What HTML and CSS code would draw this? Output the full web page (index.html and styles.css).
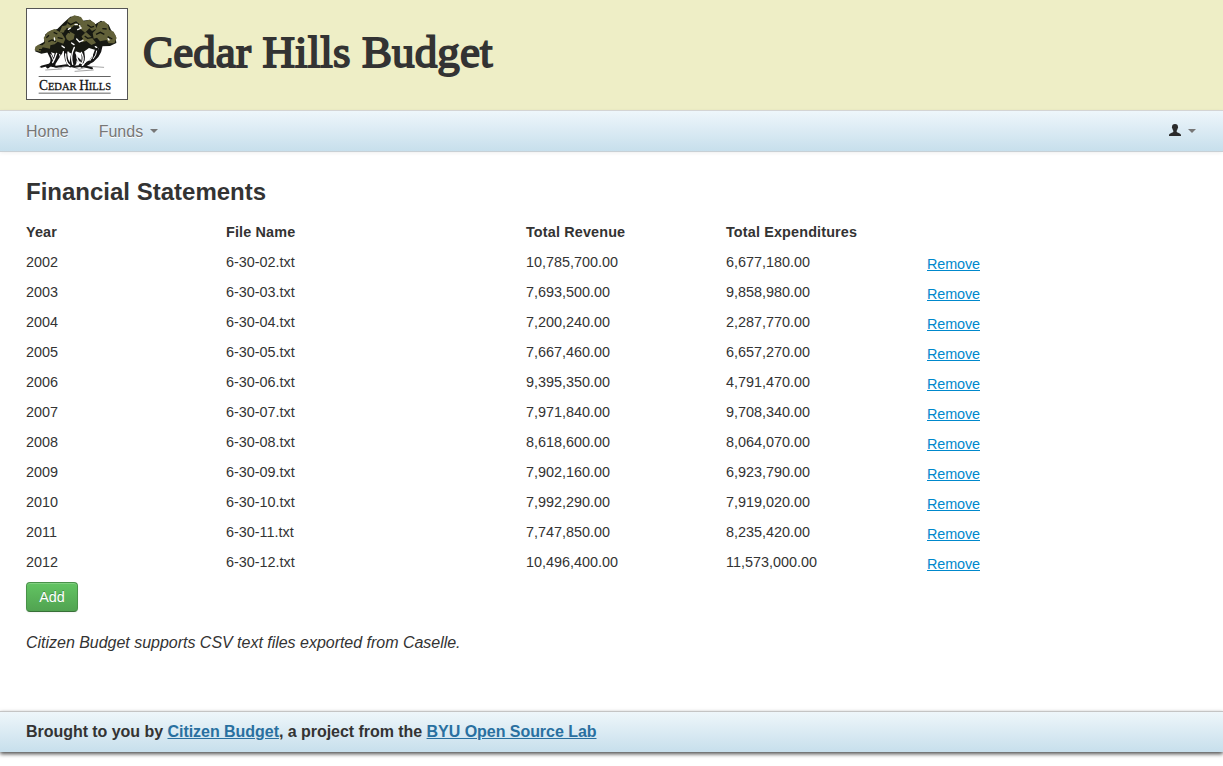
FILE: index.html
```html
<!DOCTYPE html>
<html lang="en">
<head>
<meta charset="utf-8">
<title>Cedar Hills Budget</title>
<link rel="stylesheet" href="styles.css">
</head>
<body>
<header class="masthead">
<svg class="logo" viewBox="18 12 306 276" role="img" aria-label="Cedar Hills">
<rect x="19.5" y="13.5" width="303" height="273" fill="#fff" stroke="#555" stroke-width="3"/>
<g fill="none" stroke="#141414" stroke-linecap="round">
<path d="M60 189L92 184L116 192L150 185L177 196L207 187L251 190M77 198L125 195M165 202L220 198" stroke="#777" stroke-width="2"/>
<path d="M83 188Q99 181 96 163L86 142M98 184Q110 164 123 144M101 183L111 139M151 185Q135 171 137 137M155 183Q151 160 172 120M160 182Q172 177 153 134M181 184Q194 174 188 145M185 186Q219 179 230 137M178 170Q157 155 158 130M202 178Q239 162 243 124" stroke-width="10"/>
<path d="M64 188L86 182L108 188L139 184L164 188L187 185L216 193" stroke-width="6"/>
</g>
<path d="M45 142L54 124L72 114L76 91L92 80L112 75L131 56L151 38L174 36L188 50L210 47L226 61L243 50L266 62L273 78L286 93L289 117L270 126L245 127L229 139L207 132L185 148L167 142L151 148L136 139L111 150L90 144L64 149Z" fill="#171912"/>
<g fill="#626139">
<path d="M44 139L46 128L55 122L67 124L75 117L71 101L83 84L103 75L125 87L136 105L130 119L113 113L104 121L91 124L90 134L68 130L61 143Z"/>
<path d="M119 85L126 67L139 64L145 45L163 34L183 39L193 55L184 69L164 63L151 74L141 71L130 86Z"/>
<path d="M180 74L188 53L208 47L224 57L230 74L216 81L208 73L195 86L188 80Z"/>
<path d="M227 78L235 56L252 51L264 62L267 77L281 83L290 102L283 118L266 118L260 108L240 112L231 101L221 104L218 87Z"/>
<path d="M137 96L148 82L164 91L161 106L148 111L140 106ZM185 97L198 84L214 98L228 117L214 123L199 111L187 115Z"/>
</g>
<g fill="none" stroke="#15170f" stroke-width="4">
<path d="M79 101L87 94M85 113L96 108L108 112M101 85L112 90M113 101L128 104M142 55L152 62L168 54L181 65M134 80L150 87M178 96L188 105M202 62L213 70L222 67M228 91L241 85L253 91M247 74L260 75M263 98L277 105M194 96L203 103L219 100M57 137L75 137"/>
</g>
<g fill="none" stroke="#fff" stroke-linecap="round">
<path d="M137 150Q137 178 149 184M163 130Q150 156 158 181M171 151Q168 172 187 180M202 153Q196 178 187 184M184 145Q195 164 185 178M110 148Q104 166 98 176" stroke-width="4"/>
<path d="M93 152L100 168M218 145Q221 159 210 170M230 141Q229 154 220 164M146 144L148 164M119 151L125 174" stroke-width="3"/>
<path d="M103 102L104 108M165 62L172 61M179 64L181 72M173 77L184 72M145 76L151 72M264 104L267 108M170 105L178 114L189 109M155 117L162 122M126 126L133 131M226 128L230 130" stroke-width="4"/>
</g>
<path d="M56 217.500H272M56 267.500H272" stroke="#444" stroke-width="2.500"/>
<text x="57" y="257" textLength="216" lengthAdjust="spacingAndGlyphs" class="logo-name"><tspan font-size="42">C</tspan>EDAR <tspan font-size="42">H</tspan>ILLS</text>
</svg>
<h1 class="site-title">Cedar Hills Budget</h1>
</header>
<nav class="navbar">
<a class="nav-link">Home</a>
<a class="nav-link">Funds<span class="caret"></span></a>
<a class="nav-link user"><svg class="user-icon" viewBox="0 0 12 12"><path d="M6 0C3.900 0 3 1.100 3 3C2.700 3.500 3 4.300 3.400 4.600C3.600 5.800 4 6.300 4.300 6.700V8C3.700 9 0 9 0 11.200V12H12V11.200C12 9 8.300 9 7.700 8V6.700C8 6.300 8.400 5.800 8.600 4.600C9 4.300 9.300 3.500 9 3C9 1.100 8.100 0 6 0Z" fill="#2b2b2b"/></svg><span class="caret"></span></a>
</nav>
<main class="content">
<h2 class="heading">Financial Statements</h2>
<table class="statements">
<thead><tr><th class="year">Year</th><th class="file">File Name</th><th class="money">Total Revenue</th><th class="money">Total Expenditures</th><th></th></tr></thead>
<tbody>
<tr><td>2002</td><td>6-30-02.txt</td><td>10,785,700.00</td><td>6,677,180.00</td><td class="action"><a class="remove">Remove</a></td></tr>
<tr><td>2003</td><td>6-30-03.txt</td><td>7,693,500.00</td><td>9,858,980.00</td><td class="action"><a class="remove">Remove</a></td></tr>
<tr><td>2004</td><td>6-30-04.txt</td><td>7,200,240.00</td><td>2,287,770.00</td><td class="action"><a class="remove">Remove</a></td></tr>
<tr><td>2005</td><td>6-30-05.txt</td><td>7,667,460.00</td><td>6,657,270.00</td><td class="action"><a class="remove">Remove</a></td></tr>
<tr><td>2006</td><td>6-30-06.txt</td><td>9,395,350.00</td><td>4,791,470.00</td><td class="action"><a class="remove">Remove</a></td></tr>
<tr><td>2007</td><td>6-30-07.txt</td><td>7,971,840.00</td><td>9,708,340.00</td><td class="action"><a class="remove">Remove</a></td></tr>
<tr><td>2008</td><td>6-30-08.txt</td><td>8,618,600.00</td><td>8,064,070.00</td><td class="action"><a class="remove">Remove</a></td></tr>
<tr><td>2009</td><td>6-30-09.txt</td><td>7,902,160.00</td><td>6,923,790.00</td><td class="action"><a class="remove">Remove</a></td></tr>
<tr><td>2010</td><td>6-30-10.txt</td><td>7,992,290.00</td><td>7,919,020.00</td><td class="action"><a class="remove">Remove</a></td></tr>
<tr><td>2011</td><td>6-30-11.txt</td><td>7,747,850.00</td><td>8,235,420.00</td><td class="action"><a class="remove">Remove</a></td></tr>
<tr><td>2012</td><td>6-30-12.txt</td><td>10,496,400.00</td><td>11,573,000.00</td><td class="action"><a class="remove">Remove</a></td></tr>
</tbody>
</table>
<button class="add">Add</button>
<p class="note">Citizen Budget supports CSV text files exported from Caselle.</p>
</main>
<footer class="footer">Brought to you by <a class="footer-link">Citizen Budget</a>, a project from the <a class="footer-link">BYU Open Source Lab</a></footer>
</body>
</html>
```
FILE: styles.css
```css
* { box-sizing: border-box; }
body { margin: 0; height: 766px; overflow: hidden; background: #fff; color: #333; font: 16px/20px "Liberation Sans", Arial, sans-serif; }
.masthead { height: 110px; padding: 8px 26px; display: flex; background: #eeeec6; }
.logo { width: 102px; height: 92px; flex: none; }
.logo-name { font: 33px "Liberation Serif", serif; fill: #111; stroke: #111; stroke-width: .8px; }
.site-title { margin: 14px 0 0 15px; font: 400 45px/60px "Liberation Serif", serif; letter-spacing: .12px; white-space: nowrap; -webkit-text-stroke: 1.8px #333; }
.navbar { height: 42px; padding: 0 26px; display: flex; align-items: center; gap: 30px; border-top: 1px solid #d4d4d4; border-bottom: 1px solid #c8d0d5; background: linear-gradient(#eef6fb, #c7dfec); box-shadow: 0 1px 4px rgba(0,0,0,.065); }
.nav-link { display: flex; align-items: center; padding-top: 1px; color: #777; text-shadow: 0 1px 0 #fff; }
.caret { margin: -1px 0 0 7px; border-top: 4px solid #777; border-left: 4px solid transparent; border-right: 4px solid transparent; }
.user { margin-left: auto; margin-right: 1px; }
.user-icon { width: 12px; height: 12px; margin-top: -3px; }
.content { height: 559px; padding: 20px 26px 0; }
.heading { margin: 0 0 5px; font-size: 24px; line-height: 40px; }
.statements { border-collapse: collapse; table-layout: fixed; width: 1000px; font-size: 14.4px; text-align: left; }
.statements th, .statements td { height: 30px; padding: 0; line-height: 20px; vertical-align: middle; }
.statements th { letter-spacing: .15px; }
.year, .money { width: 200px; }
.file { width: 300px; }
.statements .action { padding: 4px 0 0 1px; }
.remove { color: #08c; letter-spacing: -.1px; text-decoration: underline; }
.add { display: block; margin-top: 5px; width: 52px; height: 30px; padding: 0; border: 1px solid #499249; border-bottom-color: #387038; border-radius: 4px; background: linear-gradient(#62c462, #51a351); color: #fff; font: 14.4px/20px "Liberation Sans", sans-serif; text-shadow: 0 -1px 0 rgba(0,0,0,.25); box-shadow: inset 0 1px 0 rgba(255,255,255,.2), 0 1px 2px rgba(0,0,0,.05); }
.note { margin: 21px 0 0; font-style: italic; letter-spacing: -.02px; }
.footer { height: 41px; padding: 10px 26px; border-top: 1px solid #c4c4c4; background: linear-gradient(#eef6fa, #c7dfec); font-weight: 700; letter-spacing: -.04px; box-shadow: 0 2px 4px rgba(0,0,0,.7); }
.footer-link { color: #2970a0; text-decoration: underline; }
```
